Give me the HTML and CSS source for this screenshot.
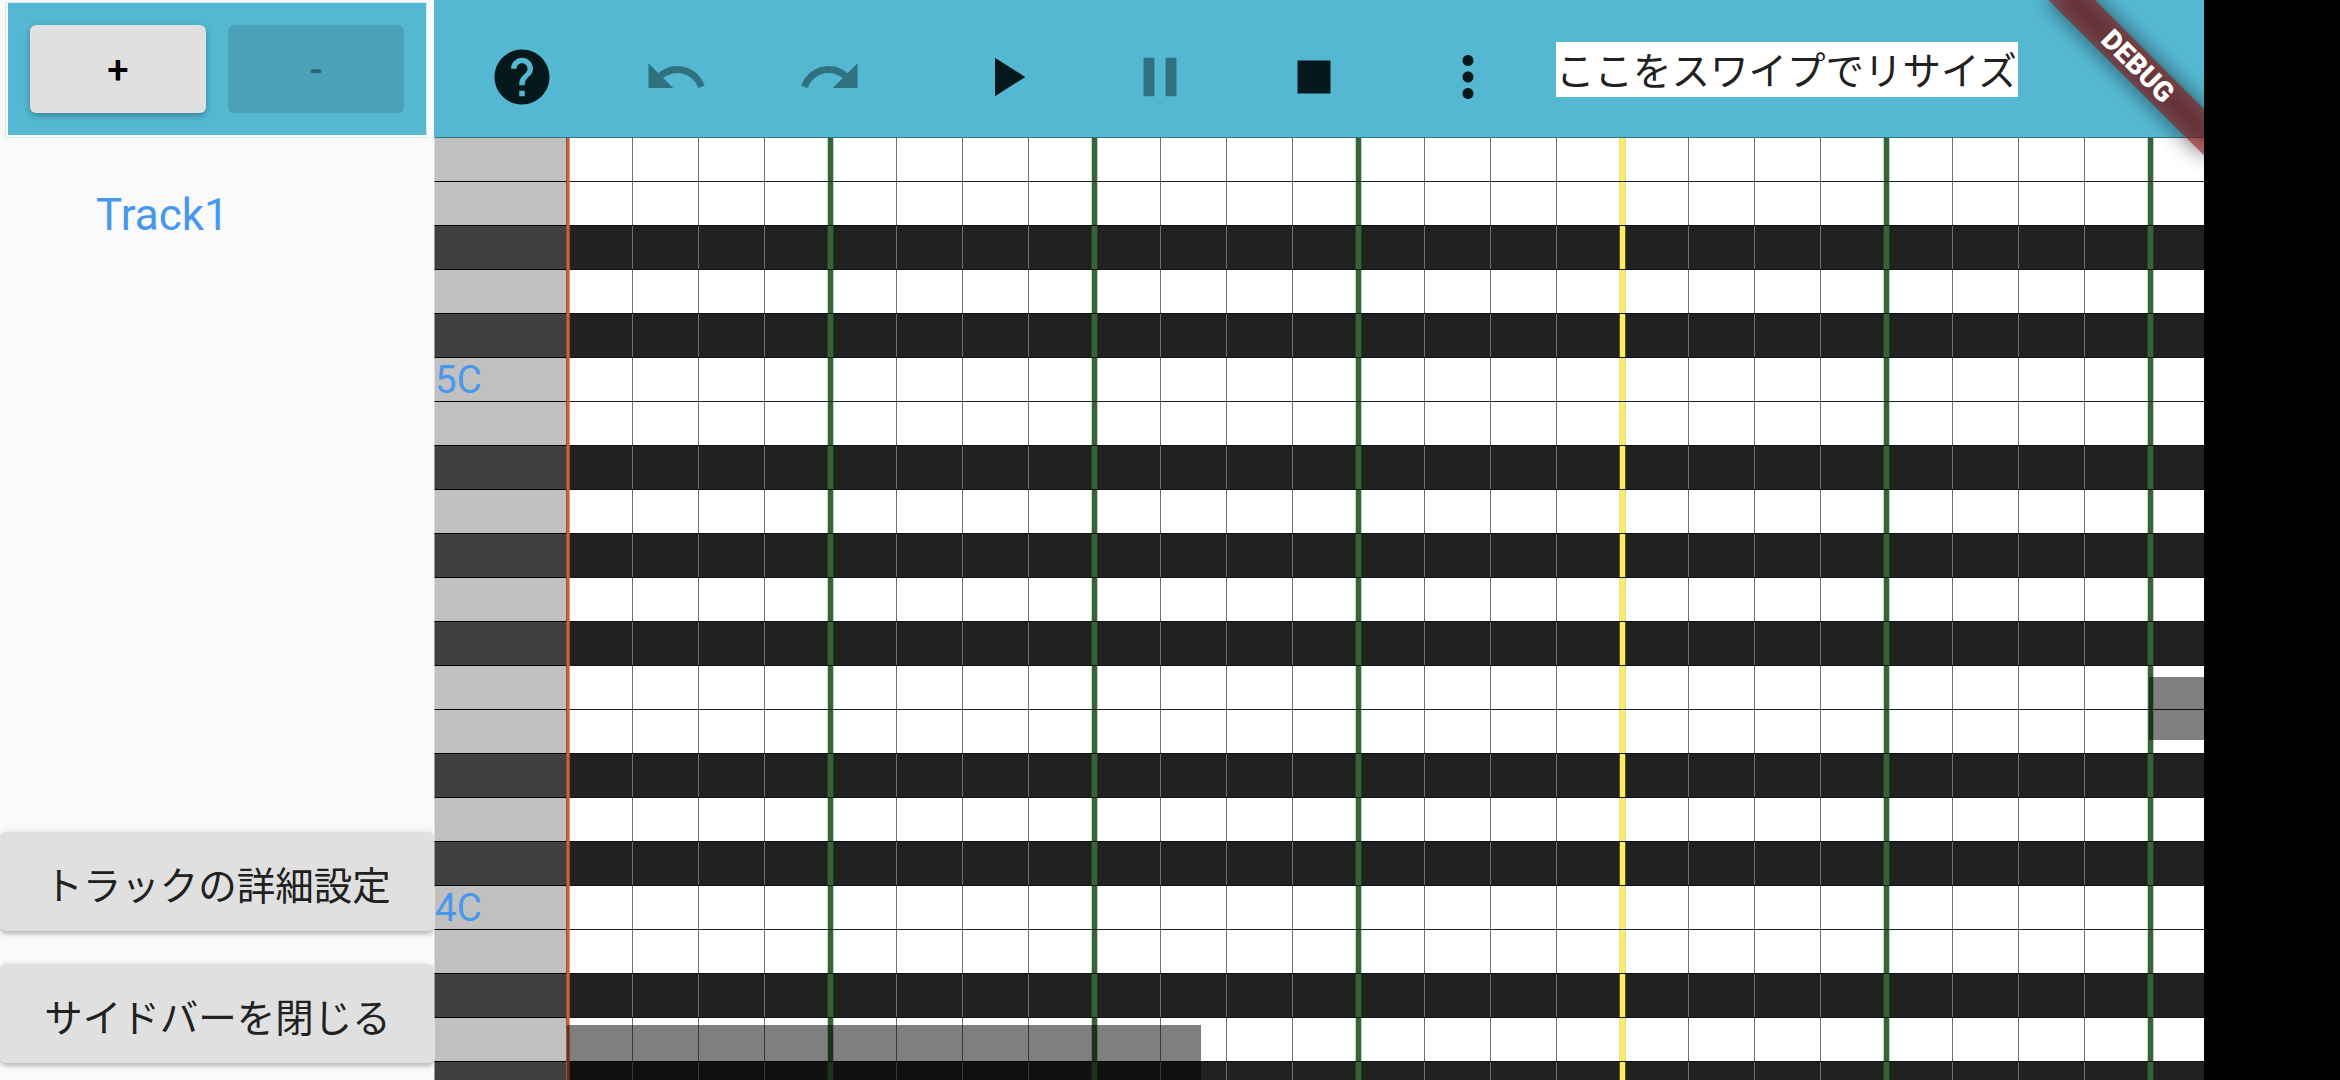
FILE: index.html
```html
<!DOCTYPE html>
<html lang="ja">
<head>
<meta charset="utf-8">
<title>Piano roll</title>
<link rel="stylesheet" href="styles.css">
</head>
<body>
<div class="app">
  <aside class="sidebar">
    <div class="track-actions">
      <button class="btn">+</button>
      <button class="btn btn-disabled" disabled>-</button>
    </div>
    <div class="track-list">
      <div class="track">Track1</div>
    </div>
    <div class="sidebar-footer">
      <button class="wide-btn">トラックの詳細設定</button>
      <button class="wide-btn">サイドバーを閉じる</button>
    </div>
  </aside>
  <main class="editor">
    <header class="toolbar">
      <svg class="icon" viewBox="0 0 24 24"><path d="M12 2C6.48 2 2 6.48 2 12s4.48 10 10 10 10-4.480 10-10S17.520 2 12 2zm1 17h-2v-2h2v2zm2.070-7.750l-.9.920C13.450 12.900 13 13.500 13 15h-2v-.5c0-1.100.450-2.100 1.170-2.830l1.240-1.260c.370-.360.590-.860.590-1.410 0-1.100-.9-2-2-2s-2 .9-2 2H8c0-2.210 1.790-4 4-4s4 1.790 4 4c0 .880-.360 1.680-.930 2.250z"/></svg>
      <svg class="icon icon-off" viewBox="0 0 24 24"><path d="M12.500 8c-2.650 0-5.050.990-6.900 2.600L2 7v9h9l-3.620-3.620c1.390-1.160 3.160-1.880 5.120-1.880 3.540 0 6.550 2.310 7.600 5.500l2.370-.780C21.080 11.030 17.150 8 12.500 8z"/></svg>
      <svg class="icon icon-off" viewBox="0 0 24 24"><path d="M18.400 10.600C16.550 8.990 14.150 8 11.500 8c-4.650 0-8.580 3.030-9.960 7.220L3.900 16c1.050-3.190 4.050-5.500 7.600-5.500 1.950 0 3.730.720 5.120 1.880L13 16h9V7l-3.600 3.600z"/></svg>
      <svg class="icon icon-play" viewBox="0 0 24 24"><path d="M8 5v14l11-7z"/></svg>
      <svg class="icon icon-off" viewBox="0 0 24 24"><path d="M6 19h4V5H6v14zm8-14v14h4V5h-4z"/></svg>
      <svg class="icon" viewBox="0 0 24 24"><path d="M6 6h12v12H6z"/></svg>
      <svg class="icon" viewBox="0 0 24 24"><path d="M12 8c1.100 0 2-.9 2-2s-.9-2-2-2-2 .9-2 2 .9 2 2 2zm0 2c-1.100 0-2 .9-2 2s.9 2 2 2 2-.9 2-2-.9-2-2-2zm0 6c-1.100 0-2 .9-2 2s.9 2 2 2 2-.9 2-2-.9-2-2-2z"/></svg>
      <div class="resize-handle">ここをスワイプでリサイズ</div>
    </header>
    <section class="roll">
      <div class="row"><div class="key"></div><div class="lane"></div></div>
      <div class="row"><div class="key"></div><div class="lane"></div></div>
      <div class="row sharp"><div class="key"></div><div class="lane"></div></div>
      <div class="row"><div class="key"></div><div class="lane"></div></div>
      <div class="row sharp"><div class="key"></div><div class="lane"></div></div>
      <div class="row"><div class="key">5C</div><div class="lane"></div></div>
      <div class="row"><div class="key"></div><div class="lane"></div></div>
      <div class="row sharp"><div class="key"></div><div class="lane"></div></div>
      <div class="row"><div class="key"></div><div class="lane"></div></div>
      <div class="row sharp"><div class="key"></div><div class="lane"></div></div>
      <div class="row"><div class="key"></div><div class="lane"></div></div>
      <div class="row sharp"><div class="key"></div><div class="lane"></div></div>
      <div class="row"><div class="key"></div><div class="lane"></div></div>
      <div class="row"><div class="key"></div><div class="lane"></div></div>
      <div class="row sharp"><div class="key"></div><div class="lane"></div></div>
      <div class="row"><div class="key"></div><div class="lane"></div></div>
      <div class="row sharp"><div class="key"></div><div class="lane"></div></div>
      <div class="row"><div class="key">4C</div><div class="lane"></div></div>
      <div class="row"><div class="key"></div><div class="lane"></div></div>
      <div class="row sharp"><div class="key"></div><div class="lane"></div></div>
      <div class="row"><div class="key"></div><div class="lane"></div></div>
      <div class="row sharp"><div class="key"></div><div class="lane"></div></div>
      <div class="playhead"></div>
      <div class="note note-low"></div>
      <div class="note note-high"></div>
    </section>
    <div class="banner"><span class="banner-text">DEBUG</span></div>
  </main>
</div>
</body>
</html>
```
FILE: styles.css
```css
* { box-sizing: border-box; }

body {
  margin: 0;
  background: #000;
  font-family: Roboto, "Noto Sans CJK JP", sans-serif;
  color: #212121;
}

.app {
  display: flex;
  width: 2204px;
  height: 1080px;
  overflow: hidden;
  background: #fafafa;
}

/* Sidebar */
.sidebar {
  display: flex;
  flex-direction: column;
  flex: none;
  width: 434px;
  padding-bottom: 17px;
}

.track-actions {
  display: flex;
  gap: 22px;
  width: 424px;
  height: 136px;
  margin: 2px 0 0 5px;
  padding: 21px 20px 0 23px;
  border: 1px solid #cdebf1;
  border-right-color: #fff;
  background: #55b8d2;
  box-shadow: inset 2px 0 #fff, inset -1px 0 #fff, inset -2px 0 #d5eef4, inset 0 -2px #fff;
}

.btn {
  width: 176px;
  height: 88px;
  margin: 1px 0 0 1px;
  padding: 2px 0 0;
  border: 0;
  border-radius: 6px;
  background: #e0e0e0;
  color: #000;
  font: 500 38.5px/1 Roboto, sans-serif;
  box-shadow: 0 3px 5px rgba(0, 0, 0, .16), 0 2px 10px rgba(0, 0, 0, .14);
}

.btn-disabled {
  margin-left: 0;
  background: rgba(0, 0, 0, .12);
  color: rgba(0, 0, 0, .38);
  box-shadow: none;
}

.track-list {
  flex: 1;
  padding: 49px 0 0 96px;
}

.track {
  color: #4897ef;
  font-size: 44px;
  line-height: 56px;
}

.sidebar-footer {
  display: flex;
  flex-direction: column;
  gap: 33px;
}

.wide-btn {
  height: 99px;
  padding: 3px 0 0 1px;
  border: 0;
  border-radius: 6px;
  background: #e0e0e0;
  color: #212121;
  font: 400 38.5px/1 "Noto Sans CJK JP", sans-serif;
  box-shadow: 0 3px 4px rgba(0, 0, 0, .2), 0 1px 8px rgba(0, 0, 0, .13);
}

/* Editor */
.editor {
  position: relative;
  flex: 1;
  overflow: hidden;
}

.toolbar {
  display: flex;
  gap: 88px;
  height: 137px;
  padding: 44px 0 0 55px;
  background: #55b8d2;
}

.icon {
  flex: none;
  width: 66px;
  height: 66px;
  fill: #05191d;
}

.icon-off { fill: #2f727f; }
.icon-play { margin-left: 22px; }

.resize-handle {
  width: 462px;
  height: 55px;
  margin: -2px 0 0 -33px;
  background: #fff;
  font: 400 38.5px/53px "Noto Sans CJK JP", sans-serif;
  white-space: nowrap;
}

/* Piano roll */
.roll {
  position: relative;
  display: grid;
  grid-auto-rows: 44px;
}

.row {
  display: grid;
  grid-template-columns: 132px 1fr;
}

.key {
  border-top: 1px solid #000;
  border-left: 1px solid #dedede;
  background: #c0c0c0;
  color: #4897ef;
  font-size: 38.5px;
  line-height: 43px;
}

/* Beat lines every 66px, bar lines every 264px, one highlighted bar */
.lane {
  --edge: #c4d4c4;
  --beat-edge: #dadcae;
  border-top: 1px solid #1e1e1e;
  background-color: #fff;
  background-image:
    linear-gradient(90deg, transparent 1053px, var(--beat-edge) 1053px 1054px, #fcec60 1054px 1059px, var(--beat-edge) 1059px 1060px, transparent 1060px),
    linear-gradient(90deg, var(--edge) 0 1px, #376437 1px 6px, var(--edge) 6px 7px, transparent 7px),
    linear-gradient(90deg, #6b7270 0 1px, transparent 1px);
  background-size: 100% 100%, 264px 100%, 66px 100%;
  background-position: 0 0, 261px 0, 0 0;
}

.sharp .key { background-color: #404040; border-left-color: #9a9a9a; }

.sharp .lane {
  --edge: #263826;
  --beat-edge: #5a572e;
  background-color: #212121;
  border-top-color: #101010;
}

.sharp + .row .lane { border-top-color: #141414; }
.row:first-child .key, .row:first-child .lane { border-top-color: #2f7480; }

.playhead {
  position: absolute;
  top: 1px;
  bottom: 0;
  left: 132px;
  width: 4px;
  background: linear-gradient(90deg, rgba(200, 80, 80, .6) 1px, #e5533f 1px 3px, rgba(205, 120, 50, .55) 3px);
}

.note {
  position: absolute;
  background: rgba(0, 0, 0, .5);
}

.note-low { left: 133px; top: 888px; width: 634px; height: 80px; }
.note-high { left: 1715px; top: 540px; width: 60px; height: 63px; }

/* Corner ribbon */
.banner {
  position: absolute;
  top: 0;
  right: -110px;
  width: 220px;
  height: 110px;
  padding-top: 77px;
  transform: rotate(45deg);
  transform-origin: 50% 0;
}

.banner::before {
  content: "";
  position: absolute;
  inset: 77px 0 0;
  background: rgba(0, 0, 0, .56);
  filter: blur(10.9px);
}

.banner-text {
  position: relative;
  display: block;
  height: 33px;
  background: rgba(154, 22, 20, .56);
  color: #fff;
  font-size: 28px;
  font-weight: 900;
  line-height: 33px;
  text-align: center;
}
```
